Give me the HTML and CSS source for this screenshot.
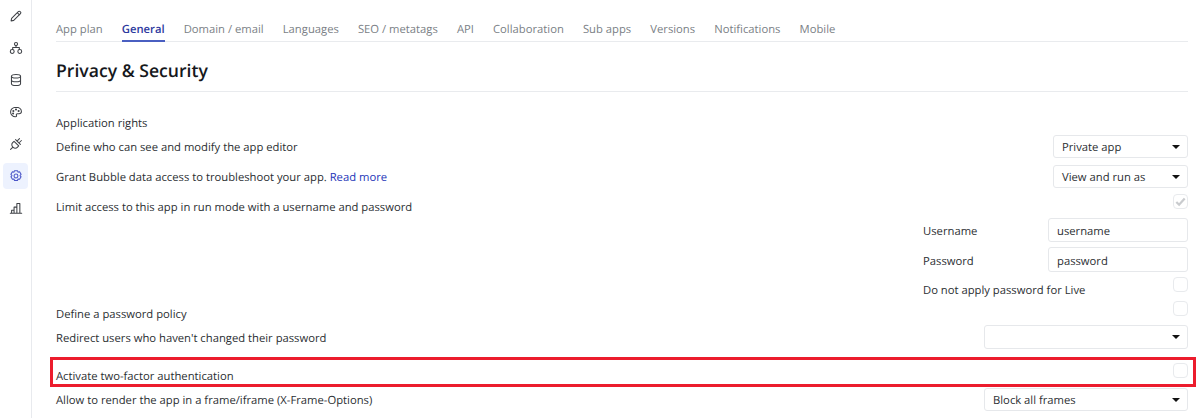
FILE: index.html
```html
<!DOCTYPE html>
<html lang="en">
<head>
<meta charset="utf-8">
<title>Privacy &amp; Security</title>
<link rel="stylesheet" href="styles.css">
</head>
<body>
<div class="app">
  <aside class="rail">
    <span class="rail-item"><svg viewBox="0 0 16 16" class="ico"><path d="M3 10.6 10.6 3a1.5 1.5 0 0 1 2.2 0l.3.3a1.5 1.5 0 0 1 0 2.1L5.4 13l-3 .6zM9.4 4.2l2.5 2.5"/></svg></span>
    <span class="rail-item"><svg viewBox="0 0 16 16" class="ico"><circle cx="8" cy="3.5" r="1.8"/><circle cx="3.7" cy="12" r="2.2"/><circle cx="12.3" cy="12" r="2.2"/><path d="M8 5.3v2.2M4.2 9.8V7.5h7.6v2.3"/></svg></span>
    <span class="rail-item"><svg viewBox="0 0 16 16" class="ico"><ellipse cx="8" cy="3.8" rx="5.2" ry="2"/><path d="M2.8 3.8v8.4c0 1.1 2.3 2 5.2 2s5.2-.9 5.2-2V3.800M2.800 8c0 1.100 2.300 2 5.200 2s5.200-.9 5.200-2"/></svg></span>
    <span class="rail-item"><svg viewBox="0 0 16 16" class="ico"><path d="M8 2.500C4.300 2.500 1.800 5 1.800 8s2.500 5.500 5.600 5.500c1.300 0 1.500-.9 1.100-1.700-.5-1 .1-1.900 1.200-1.900h1.800c1.600 0 2.700-1 2.700-2.400C14.200 4.600 11.500 2.500 8 2.500z"/><circle cx="5" cy="6.800" r=".6"/><circle cx="8" cy="5.200" r=".6"/><circle cx="11" cy="6.800" r=".6"/><circle cx="4.700" cy="9.700" r=".6"/></svg></span>
    <span class="rail-item"><svg viewBox="0 0 16 16" class="ico"><path d="M1.800 14.200l2.700-2.700M12 1.800 10 3.800M14.200 4l-2 2M5.800 4.900l5.300 5.300-1.600 1.600a3.300 3.300 0 0 1-4.700 0l-.6-.6a3.300 3.300 0 0 1 0-4.700zM7.500 3l5.500 5.500"/></svg></span>
    <span class="rail-item rail-active"><svg viewBox="0 0 16 16" class="ico"><path d="M6.300 1.900h3.400l.6 1.700 1.800-.4 1.700 2.900-1.200 1.400 1.200 1.400-1.700 2.900-1.800-.4-.6 1.700H6.300l-.6-1.700-1.800.4-1.700-2.900 1.200-1.400-1.200-1.400 1.700-2.900 1.800.4z"/><circle cx="8" cy="8" r="2.200"/></svg></span>
    <span class="rail-item"><svg viewBox="0 0 16 16" class="ico"><path d="M1.500 14h13M3 14v-3.500h2.800V14M5.800 14V7h3.200v7M9 14V2.800h3.400V14"/></svg></span>
  </aside>
  <main class="content">
    <nav class="tabs">
      <span class="tab">App plan</span>
      <span class="tab tab-on">General</span>
      <span class="tab">Domain / email</span>
      <span class="tab">Languages</span>
      <span class="tab">SEO / metatags</span>
      <span class="tab">API</span>
      <span class="tab">Collaboration</span>
      <span class="tab">Sub apps</span>
      <span class="tab">Versions</span>
      <span class="tab">Notifications</span>
      <span class="tab">Mobile</span>
    </nav>
    <h1 class="title">Privacy &amp; Security</h1>
    <section class="form">
      <div class="row h-head"><span class="label">Application rights</span></div>
      <div class="row h-sel"><span class="label">Define who can see and modify the app editor</span><div class="select w-small">Private app<i class="caret"></i></div></div>
      <div class="row h-sel gap-7"><span class="label">Grant Bubble data access to troubleshoot your app. <a class="link">Read more</a></span><div class="select w-small">View and run as<i class="caret"></i></div></div>
      <div class="row h-check"><span class="label">Limit access to this app in run mode with a username and password</span><span class="check"><svg viewBox="0 0 14 14" class="tick"><path d="M2.500 7.500 5.500 10.500 11.500 3.800"/></svg></span></div>
      <div class="sub">
        <div class="subrow"><span class="label">Username</span><div class="input">username</div></div>
        <div class="subrow tall"><span class="label">Password</span><div class="input">password</div></div>
        <div class="subrow subcheck"><span class="label">Do not apply password for Live</span><span class="check"></span></div>
      </div>
      <div class="row h-policy"><span class="label">Define a password policy</span><span class="check"></span></div>
      <div class="row h-redirect"><span class="label">Redirect users who haven't changed their password</span><div class="select w-large"><i class="caret"></i></div></div>
      <div class="row h-two"><span class="label">Activate two-factor authentication</span><span class="check"></span><b class="highlight"></b></div>
      <div class="row h-frame"><span class="label">Allow to render the app in a frame/iframe (X-Frame-Options)</span><div class="select w-large">Block all frames<i class="caret"></i></div></div>
    </section>
  </main>
</div>
</body>
</html>
```
FILE: styles.css
```css
* { box-sizing: border-box; }
html, body { margin: 0; height: 418px; overflow: hidden; background: #fff; }
body { font-family: "Open Sans", "Liberation Sans", sans-serif; font-size: 11.25px; color: #2c2f33; text-rendering: geometricPrecision; }
.app { display: flex; height: 418px; }
.rail { width: 32px; flex: none; border-right: 1px solid #e8eaee; display: flex; flex-direction: column; align-items: flex-start; padding: 3px 0 0 3px; gap: 6px; }
.rail-item { width: 25px; height: 26px; display: flex; align-items: center; justify-content: center; border-radius: 4px; color: #3f4247; }
.rail-active { background: #edf2fe; color: #4a55c8; }
.ico { width: 14px; height: 14px; fill: none; stroke: currentColor; stroke-width: 1.2; stroke-linejoin: round; stroke-linecap: round; }
.content { flex: 1; padding: 0 12px 0 24px; min-width: 0; }
.tabs { display: flex; gap: 19.1px; height: 42px; padding-top: 20px; border-bottom: 1px solid #e9ebee; color: #7b7f86; }
.tab { height: 22px; line-height: 20px; }
.tab-on { color: #2d3a9e; font-weight: 600; border-bottom: 2px solid #4a5fc1; }
.title { margin: 0; height: 50px; border-bottom: 1px solid #e9ebee; font-size: 17.6px; font-weight: 600; color: #16181c; line-height: 58px; }
.form { padding-top: 18px; }
.row { position: relative; display: flex; align-items: center; justify-content: space-between; }
.label { padding-top: 1px; }
.h-head .label, .h-check .label, .h-policy .label, .h-redirect .label, .h-two .label, .subrow .label { padding-top: 3px; }
.h-head { height: 25px; padding-bottom: 1px; }
.h-sel { height: 23px; }
.gap-7 { margin-top: 7px; }
.h-check { height: 24px; margin-top: 6px; }
.h-policy { height: 24px; }
.h-redirect { height: 24px; }
.h-two { height: 24px; margin-top: 14px; }
.h-frame { height: 23px; margin-top: 1px; }
.select { position: relative; height: 100%; padding: 1px 8px 0; border: 1px solid #e6e8eb; border-radius: 3px; display: flex; align-items: center; }
.w-small { width: 135px; }
.w-large { width: 204px; }
.caret { position: absolute; right: 7px; top: 50%; margin-top: -2px; border-left: 4.5px solid transparent; border-right: 4.5px solid transparent; border-top: 4.5px solid #111; }
.check { width: 15px; height: 15px; flex: none; align-self: flex-start; border: 1px solid #e8eaed; border-radius: 4px; display: block; }
.tick { display: block; width: 13px; height: 13px; fill: none; stroke: #c9cbce; stroke-width: 2.4; }
.link { color: #2536b8; }
.sub { margin-left: 867px; }
.subrow { display: flex; align-items: center; justify-content: space-between; height: 24px; margin-bottom: 5px; }
.tall { height: 25px; }
.subcheck { margin: 5px 0 0; }
.input { width: 140px; height: 100%; padding: 2px 8px 0; border: 1px solid #e6e8eb; border-radius: 3px; display: flex; align-items: center; }
.tall .input { padding-top: 3px; }
.highlight { position: absolute; left: -6px; right: -8px; top: -6px; bottom: 0; border: 3px solid #ec1c2d; pointer-events: none; }
```
